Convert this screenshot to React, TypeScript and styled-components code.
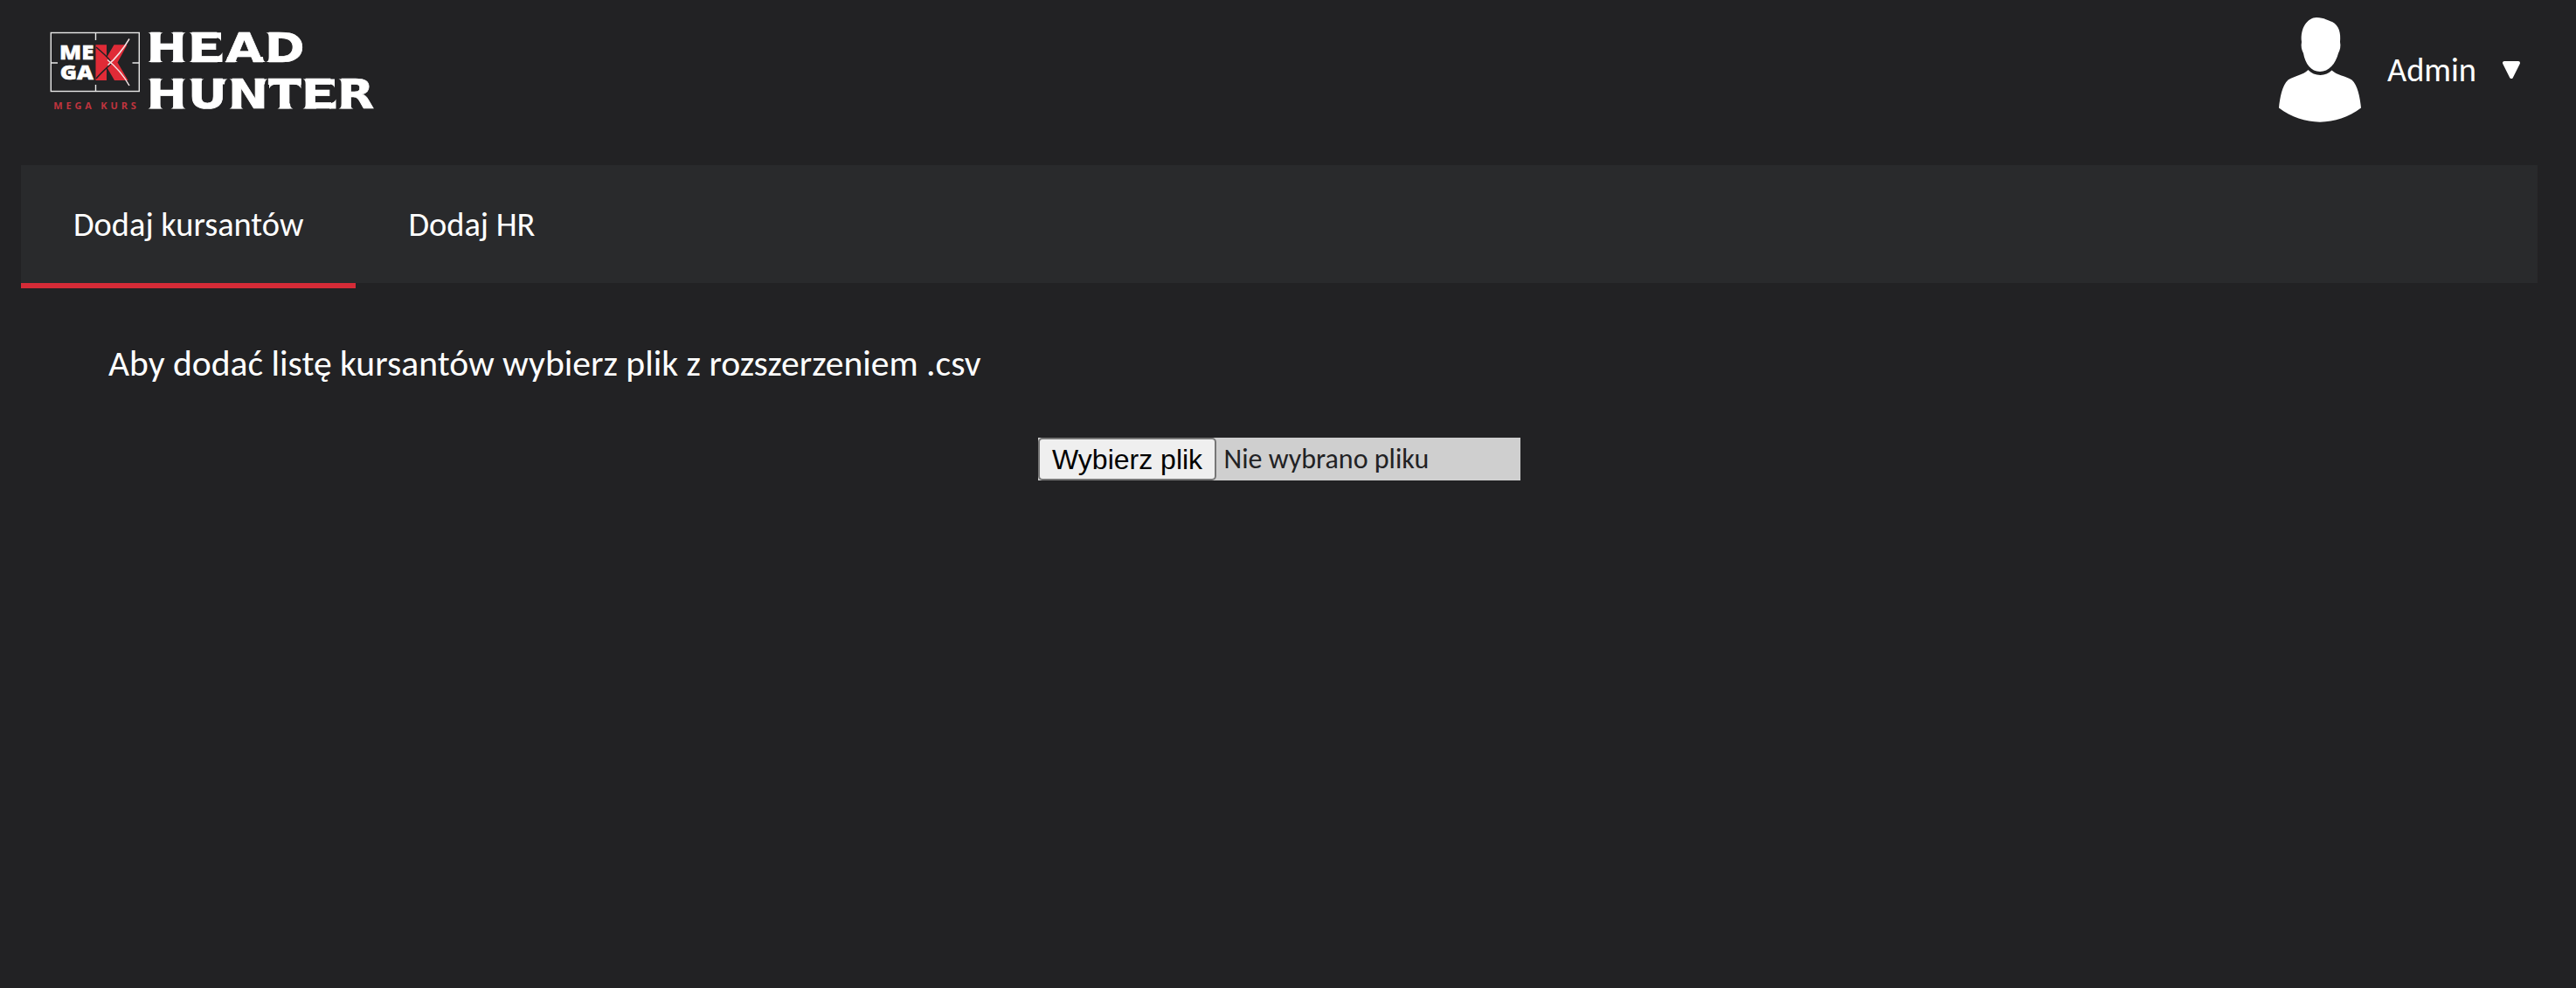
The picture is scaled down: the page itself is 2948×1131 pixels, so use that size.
import React, { useRef, useState } from 'react';
import styled, { createGlobalStyle } from 'styled-components';

const GlobalStyle = createGlobalStyle`
  html { font-size: 32px; }
  body {
    margin: 0;
    background: #222224;
    color: #fff;
    font-family: Calibri, Carlito, 'Open Sans', sans-serif;
  }
`;

const Page = styled.div`
  box-sizing: border-box;
  min-height: 1131px;
  padding: 0 44px 0 24px;
`;

const Header = styled.header`
  display: flex;
  align-items: flex-start;
  justify-content: space-between;
  height: 189px;
  box-sizing: border-box;
  padding: 20px 20px 0 16px;
`;

const UserMenu = styled.div`
  display: flex;
  align-items: center;
  height: 120px;
`;

const UserName = styled.span`
  margin: 0 30px 0 30px;
  font-size: 1.2rem;
  line-height: 48px;
`;

const Tabs = styled.nav`
  display: flex;
  height: 135px;
  background: #292a2c;
`;

const Tab = styled.a<{ $active?: boolean }>`
  display: flex;
  align-items: center;
  height: 135px;
  padding: 0 60px;
  color: #fff;
  font-size: 1.2rem;
  text-decoration: none;
  cursor: pointer;
  border-bottom: 6px solid ${(p) => (p.$active ? '#d52b37' : 'transparent')};
  background-clip: padding-box;
`;

const Content = styled.main`
  display: flex;
  flex-direction: column;
`;

const Hint = styled.p`
  margin: 67px 0 0 100px;
  font-size: 1.3rem;
  line-height: 50px;
`;

const FilePicker = styled.label`
  display: flex;
  align-items: stretch;
  align-self: center;
  width: 552px;
  height: 49px;
  margin-top: 60px;
  background: #cfcfcf;
  color: #222224;
`;

const FileButton = styled.button`
  box-sizing: border-box;
  width: 204px;
  padding: 0;
  border: 2px solid #767676;
  border-radius: 5px;
  background: #efefef;
  color: #000;
  font: 32px/42px 'Liberation Sans', Arial, sans-serif;
  white-space: nowrap;
`;

const FileName = styled.span`
  margin-left: 8.5px;
  font-size: 1rem;
  line-height: 49px;
`;

/* Flared foot (or cap, when up is -1) of a letter stem: left, right, edge y. */
const foot = (l: number, r: number, y: number, up = 1, out = 3.5) =>
  `M${l - out} ${y}Q${l} ${y - up} ${l} ${y - 6 * up}H${r}Q${r} ${y - up} ${r + out} ${y}z`;

const serifs = [
  foot(173, 183, 71), foot(173, 183, 37.3, -1), foot(199, 209, 71), foot(199, 209, 37.3, -1),
  foot(220, 229, 71), foot(220, 229, 37.3, -1), foot(260, 269, 71, 1, 3), foot(292, 301, 71, 1, 3),
  foot(308, 317, 71), foot(308, 317, 37.3, -1),
  foot(173, 183, 124.5), foot(173, 183, 90.6, -1), foot(199, 209, 124.5), foot(199, 209, 90.6, -1),
  foot(220, 230, 90.6, -1), foot(247, 257, 90.6, -1),
  foot(266, 275, 124.5), foot(266, 275, 90.6, -1), foot(294, 303, 90.6, -1),
  foot(321, 332, 124.5), foot(350, 359, 124.5), foot(350, 359, 90.6, -1),
  foot(391, 401, 124.5), foot(391, 401, 90.6, -1),
  'M246 37.300h7v10q-1-4-7-4.500zM247 71h7.500V60q-1.500 4-7.500 5z',
  'M376 90.600h7v10q-1-4-7-4.500zM377 124.500h7.500V113.500q-1.500 4-7.500 5z',
  'M308 90.600h8v6q-6 .500-8 5zM344.500 90.600h-8v6q6 .500 8 5z',
].join('');

const Logo = () => (
  <svg width="400" height="110" viewBox="40 20 400 110" fill="none">
    <g stroke="#e8e8e8" strokeWidth="1.4">
      <rect x="58.3" y="37.5" width="101" height="67" />
      <path d="M109.5 37v9M109.5 97v8M58 72h8M151.5 72h8" />
    </g>
    <g fill="#fff" stroke="#fff" strokeWidth="0.5" fontFamily="'Open Sans', sans-serif" fontWeight="800" fontSize="23.5">
      <text x="68" y="68.3" textLength="39.5" lengthAdjust="spacingAndGlyphs">ME</text>
      <text x="68.8" y="91" textLength="38.2" lengthAdjust="spacingAndGlyphs">GA</text>
    </g>
    <path fill="#e02b37" d="M109.500 51.300H122V66l8.500-14.700H145.500L134.500 71.500 146.500 92H131l-9-15.500V92H109.500z" />
    <path stroke="#222224" strokeWidth="1.5" d="M110 54c6 5 12 10 16.500 16M110 90c6-7 12-12 17-17" />
    <path stroke="#f4e4e5" strokeWidth="1.5" d="M148 44.500c-6 10-13 20-24.500 30M123 68.500c10 8 18 17 25 29.500" />
    <text x="61.300" y="124.500" fill="#c0343e" fontFamily="'Open Sans', sans-serif" fontWeight="700" fontSize="11" textLength="94.500" lengthAdjust="spacing">MEGA KURS</text>
    <path d={serifs} fill="#fff" />
    <g fill="#fff" stroke="#fff" strokeWidth="0.6" fontFamily="'DejaVu Sans', sans-serif" fontWeight="700" fontSize="45.800" transform="scale(1.2 1)">
      <text x="139.700 179.200 215.200 252.500" y="70.700">HEAD</text>
      <text x="139.700 179.200 217.500 255.800 287.500 321.700" y="124.200">HUNTER</text>
    </g>
  </svg>
);

const Avatar = () => (
  <svg width="94" height="120" viewBox="0 0 94 120" fill="#fff">
    <path d="M26 28C24 12 33 0 43 0c9 0 14 4 18 5 8 4 10 13 9 23 1 5 0 9-2 13C65 53 57 62 47 62S30 53 28 41c-2-4-3-8-2-13z" />
    <path d="M33.500 60C40 67.500 54 68 60.500 60.500 66 66 77 67 83.500 71.500 90 77 93 92 94 103.500 66 125 28 125 0 103.500 1 92 4 77 10.500 71.500 17 67 28 66 33.500 60z" />
  </svg>
);

const Caret = () => (
  <svg width="20" height="20" viewBox="0 0 20 20">
    <path d="M2 2h16l-8 16z" fill="#fff" stroke="#fff" strokeWidth="4" strokeLinejoin="round" />
  </svg>
);

export default function App() {
  const input = useRef<HTMLInputElement>(null);
  const [file, setFile] = useState('Nie wybrano pliku');
  const [tab, setTab] = useState(0);
  return (
    <>
      <GlobalStyle />
      <Page>
        <Header>
          <Logo />
          <UserMenu>
            <Avatar />
            <UserName>Admin</UserName>
            <Caret />
          </UserMenu>
        </Header>
        <Tabs>
          {['Dodaj kursantów', 'Dodaj HR'].map((name, i) => (
            <Tab key={name} $active={tab === i} onClick={() => setTab(i)}>{name}</Tab>
          ))}
        </Tabs>
        <Content>
          <Hint>Aby dodać listę kursantów wybierz plik z rozszerzeniem .csv</Hint>
          <FilePicker>
            <FileButton type="button" onClick={() => input.current?.click()}>Wybierz plik</FileButton>
            <FileName>{file}</FileName>
            <input ref={input} type="file" accept=".csv" hidden onChange={(e) => setFile(e.target.files?.[0]?.name ?? 'Nie wybrano pliku')} />
          </FilePicker>
        </Content>
      </Page>
    </>
  );
}
